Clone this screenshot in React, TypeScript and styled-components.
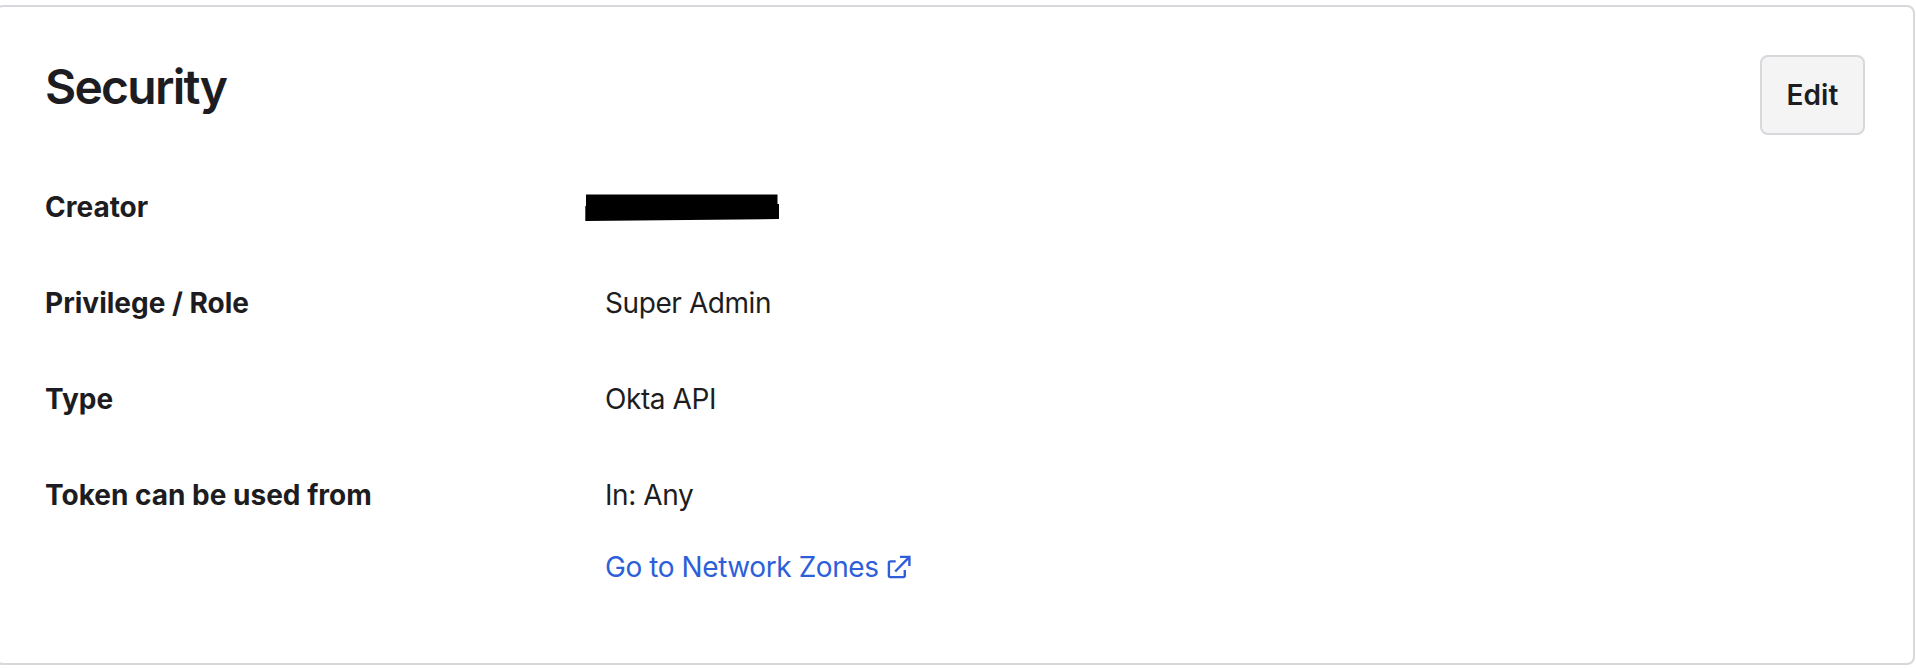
import React from "react";
import styled, { createGlobalStyle } from "styled-components";

const GlobalStyle = createGlobalStyle`
  body {
    margin: 0;
    background: #ffffff;
    overflow: hidden;
  }
  *, *::before, *::after { box-sizing: border-box; }
`;

const Page = styled.main`
  height: 668px;
  padding-top: 5px;
  overflow: hidden;
  font-family: Inter, "Liberation Sans", sans-serif;
  font-size: 28px;
  line-height: 40px;
  color: #1d1d21;
`;

const Card = styled.section`
  width: 1920px;
  height: 660px;
  margin-left: -5px;
  padding: 48px 48px 0;
  border: 2px solid #d7d7dc;
  border-radius: 8px;
  background: #ffffff;
`;

const Header = styled.header`
  display: flex;
  justify-content: space-between;
  align-items: flex-start;
`;

const Title = styled.h2`
  margin: 2px 0 0;
  font-size: 48px;
  font-weight: 600;
  line-height: 60px;
  letter-spacing: -1.75px;
`;

const EditButton = styled.button`
  width: 105px;
  height: 80px;
  padding: 0;
  border: 2px solid #d7d7dc;
  border-radius: 8px;
  background: #f4f4f4;
  color: inherit;
  font: inherit;
  font-weight: 600;
  letter-spacing: 0.1px;
`;

const Details = styled.dl`
  display: grid;
  grid-template-columns: 560px 1fr;
  row-gap: 56px;
  margin: 52px 0 0;
`;

const Label = styled.dt`
  font-weight: 700;
  white-space: nowrap;
`;

const Value = styled.dd`
  display: flex;
  flex-direction: column;
  align-items: flex-start;
  gap: 32px;
  margin: 0;
  letter-spacing: -0.42px;
`;

const Redaction = styled.svg`
  display: block;
  margin: 7px 0 0 -20px;
`;

const ZonesLink = styled.a`
  display: flex;
  align-items: center;
  gap: 7px;
  color: #2e5fd9;
  text-decoration: none;
`;

const ExternalIcon = () => (
  <svg width="26" height="24" viewBox="0 0 26 24" fill="none" stroke="currentColor" strokeWidth="2.4">
    <path d="M9.7 6.4H4.4a1.5 1.5 0 0 0-1.5 1.5v12.7a1.5 1.5 0 0 0 1.5 1.5h12.9a1.5 1.5 0 0 0 1.5-1.5V15" />
    <path d="M14 1.9h9.4v9M23.4 1.9 9.2 16.5" />
  </svg>
);

export default function App() {
  return (
    <>
      <GlobalStyle />
      <Page>
        <Card>
          <Header>
            <Title>Security</Title>
            <EditButton type="button">Edit</EditButton>
          </Header>
          <Details>
            <Label>Creator</Label>
            <Value>
              <Redaction width="195" height="28" viewBox="0 0 195 28">
                <path d="M1 0.5H192.5V10H194V25L0.3 27V12H1Z" fill="#000" />
              </Redaction>
            </Value>
            <Label>Privilege / Role</Label>
            <Value>Super Admin</Value>
            <Label>Type</Label>
            <Value>Okta API</Value>
            <Label>Token can be used from</Label>
            <Value>
              <span>In: Any</span>
              <ZonesLink href="#">
                <span>Go to Network Zones</span>
                <ExternalIcon />
              </ZonesLink>
            </Value>
          </Details>
        </Card>
      </Page>
    </>
  );
}
